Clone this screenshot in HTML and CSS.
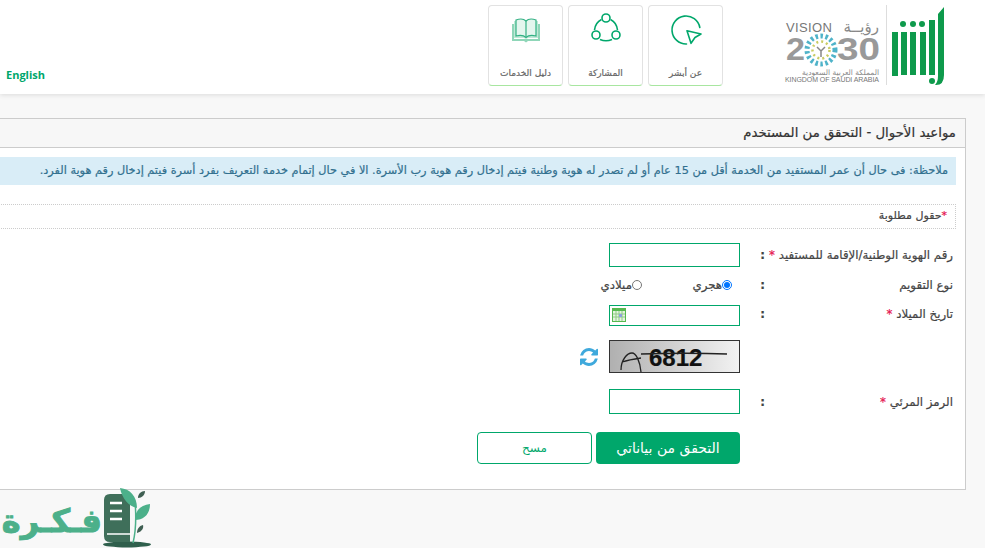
FILE: index.html
```html
<!DOCTYPE html>
<html lang="ar">
<head>
    <meta charset="UTF-8">
    <title>مواعيد الأحوال</title>
    <link rel="stylesheet" href="styles.css">
</head>
<body>
    <div class="header">
        <a class="lang" href="#">English</a>
        <div class="header-right">
            <a class="nav-card" href="#">
                <svg class="nav-icon" viewBox="0 0 34 34" width="34" height="34">
                    <path d="M3 13v17h12l2 1.500 2-1.500h12V13h-2v15H5V13z" fill="#8fd6b8"/>
                    <path d="M5 10v17h10l2 1 2-1h10V10z" fill="#bfe8d6"/>
                    <path d="M7 9c4-1.500 8-1 10 1 2-2 6-2.500 10-1v16c-4-1-8-.500-10 1.500C15 24.500 11 24 7 25z" fill="#e4f6ee" stroke="#33b184" stroke-width="1.200"/>
                    <path d="M17 10v16" stroke="#33b184" stroke-width="1.200"/>
                </svg>
                <span>دليل الخدمات</span>
            </a>
            <a class="nav-card" href="#">
                <svg class="nav-icon" viewBox="0 0 34 34" width="34" height="34">
                    <circle cx="17" cy="7" r="4" fill="none" stroke="#00a76b" stroke-width="1.600"/>
                    <circle cx="7" cy="24" r="4" fill="none" stroke="#00a76b" stroke-width="1.600"/>
                    <circle cx="27" cy="24" r="4" fill="none" stroke="#00a76b" stroke-width="1.600"/>
                    <path d="M12.500 8.500C8.500 10.500 6 14.500 5.500 19M21.500 8.500c4 2 6.500 6 7 10.500M11 28.500c3.500 1.500 8.500 1.500 12 0" fill="none" stroke="#00a76b" stroke-width="1.600"/>
                </svg>
                <span>المشاركة</span>
            </a>
            <a class="nav-card" href="#">
                <svg class="nav-icon" viewBox="0 0 34 34" width="34" height="34">
                    <path d="M30.800 16.500A14 14 0 1 0 17.500 33" fill="none" stroke="#00a76b" stroke-width="1.600" stroke-linecap="round"/>
                    <path d="M18 19.700l14 3.300-6 3.500-4 5.800z" fill="#fff" stroke="#00a76b" stroke-width="1.600" stroke-linejoin="round"/>
                </svg>
                <span>عن أبشر</span>
            </a>
            <svg class="logo" viewBox="0 0 170 90" width="170" height="90">
                <text class="logo-vision" x="6" y="32" textLength="46">VISION</text>
                <text class="logo-roya" x="99" y="32" text-anchor="end">رؤيــة</text>
                <text class="logo-year" x="6" y="60" textLength="19" lengthAdjust="spacingAndGlyphs">2</text>
                <text class="logo-year" x="57" y="60" textLength="43" lengthAdjust="spacingAndGlyphs">30</text>
                <circle cx="41" cy="50" r="14" fill="none" stroke="#4fb3c9" stroke-width="5" stroke-dasharray="2.500 2.500"/>
                <circle cx="41" cy="50" r="8.500" fill="none" stroke="#c9cc63" stroke-width="2.500" stroke-dasharray="2 3"/>
                <path d="M37 47l4 4 4-4M41 51v6" fill="none" stroke="#888" stroke-width="1.500"/>
                <text class="logo-small" x="99" y="75" text-anchor="end">المملكة العربية السعودية</text>
                <text class="logo-en" x="5" y="82" textLength="94">KINGDOM OF SAUDI ARABIA</text>
                <rect x="106" y="5" width="1" height="80" fill="#ddd"/>
                <g fill="#0e9a4c">
                    <rect x="112" y="32" width="6" height="44"/>
                    <rect x="121" y="32" width="6" height="43"/>
                    <rect x="130" y="32" width="6" height="43"/>
                    <rect x="140" y="32" width="6" height="43"/>
                    <rect x="149" y="20" width="6" height="55"/>
                    <path d="M158 14l6-7v68q0 10-8 10h-1q3-3 3-9z"/>
                    <circle cx="123" cy="24" r="3"/>
                    <circle cx="133" cy="24" r="3"/>
                    <circle cx="142" cy="24" r="3"/>
                    <circle cx="152" cy="81" r="3"/>
                </g>
            </svg>
        </div>
    </div>

    <div class="content" dir="rtl">
        <div class="panel">
            <div class="panel-title">مواعيد الأحوال - التحقق من المستخدم</div>
            <div class="panel-body">
                <div class="note">ملاحظة: فى حال أن عمر المستفيد من الخدمة أقل من 15 عام أو لم تصدر له هوية وطنية فيتم إدخال رقم هوية رب الأسرة. الا في حال إتمام خدمة التعريف بفرد أسرة فيتم إدخال رقم هوية الفرد.</div>
                <div class="required-note"><span class="star">*</span>حقول مطلوبة</div>

                <div class="form-row">
                    <label>رقم الهوية الوطنية/الإقامة للمستفيد <span class="star">*</span></label>
                    <span class="colon">:</span>
                    <div class="field"><input type="text" class="text-input"></div>
                </div>
                <div class="form-row row-radio">
                    <label>نوع التقويم</label>
                    <span class="colon">:</span>
                    <div class="field">
                        <span class="radio-item"><input type="radio" name="cal" checked>هجري</span>
                        <span class="radio-item"><input type="radio" name="cal">ميلادي</span>
                    </div>
                </div>
                <div class="form-row row-date">
                    <label>تاريخ الميلاد <span class="star">*</span></label>
                    <span class="colon">:</span>
                    <div class="field">
                        <div class="date-wrap">
                            <input type="text" class="text-input date-input">
                            <svg class="cal-icon" viewBox="0 0 14 14" width="14" height="14">
                                <rect width="14" height="14" fill="#56b84f"/>
                                <rect x="1" y="3" width="12" height="10" fill="#e4f3df"/>
                                <path d="M1 6h12M1 9h12M4 3v10M7 3v10M10 3v10" stroke="#8ecb85" stroke-width="1"/>
                                <rect x="7" y="6" width="3" height="3" fill="#8f9fe0"/>
                            </svg>
                        </div>
                    </div>
                </div>
                <div class="form-row row-captcha">
                    <label></label>
                    <span class="colon"></span>
                    <div class="field">
                        <div class="captcha">
                            <span>6812</span>
                            <svg class="captcha-lines" viewBox="0 0 131 33" width="131" height="33">
                                <path d="M12 30c0-10 6-17 11-17 4 0 8 8 9 19M13 22c6-2 12-3 19-4M32 14c30-1 60-1 86 0" fill="none" stroke="#222" stroke-width="1.300"/>
                            </svg>
                        </div>
                        <svg class="refresh" viewBox="0 0 1536 1536" width="18" height="18">
                            <path fill="#3fa9dc" d="M1511 928q0 5-1 7-64 268-268 434.500t-478 166.500q-146 0-282.500-55t-243.500-157l-129 129q-19 19-45 19t-45-19-19-45v-448q0-26 19-45t45-19h448q26 0 45 19t19 45-19 45l-137 137q71 66 161 102t187 36q134 0 250-65t186-179q11-17 53-117 8-23 30-23h192q13 0 22.500 9.500t9.500 22.500zm25-800v448q0 26-19 45t-45 19h-448q-26 0-45-19t-19-45 19-45l138-138q-148-137-349-137-134 0-250 65t-186 179q-11 17-53 117-8 23-30 23h-199q-13 0-22.500-9.500t-9.500-22.500v-7q65-268 270-434.500t480-166.500q146 0 284 55.500t245 156.500l130-129q19-19 45-19t45 19 19 45z"/>
                        </svg>
                    </div>
                </div>
                <div class="form-row row-code">
                    <label>الرمز المرئي <span class="star">*</span></label>
                    <span class="colon">:</span>
                    <div class="field"><input type="text" class="text-input code-input"></div>
                </div>
                <div class="buttons">
                    <button class="btn-primary">التحقق من بياناتي</button>
                    <button class="btn-outline">مسح</button>
                </div>
            </div>
        </div>
    </div>

    <div class="watermark">
        <span class="watermark-text" dir="rtl">فـكـرة</span>
        <svg viewBox="0 0 50 60" width="50" height="60">
            <ellipse cx="25" cy="56.500" rx="24" ry="3" fill="#2f5f4c"/>
            <path d="M2 12q0-6 6-6h20v48H8q-6 0-6-6z" fill="#3f6f5a"/>
            <path d="M8 15h12M8 23h12M8 31h12" stroke="#fff" stroke-width="2.500"/>
            <path d="M5 46h24" stroke="#fff" stroke-width="1.500"/>
            <path d="M31 55c3-12 3-30 2-42" fill="none" stroke="#4cb08a" stroke-width="1.500"/>
            <path d="M18 0c10 1 17 8 17 20C26 18 20 10 18 0zM33 32c0-10 6-15 15-16 0 10-6 16-15 16z" fill="#4cb08a"/>
            <path d="M36 10c0-4 3-7 7-7 0 4-3 7-7 7zM35 45c0-4 2-7 6-8 1 4-2 7-6 8z" fill="#3f5f52"/>
        </svg>
    </div>
</body>
</html>
```
FILE: styles.css
```css
html, body {
    margin: 0;
    height: 548px;
    overflow: hidden;
}

body {
    position: relative;
    background: #f8f8f8;
    font-family: "DejaVu Sans", Tahoma, sans-serif;
    color: #444;
}

.header {
    height: 94px;
    background: #fff;
    box-shadow: 0 1px 5px rgba(0, 0, 0, 0.12);
    display: flex;
    justify-content: space-between;
    align-items: flex-start;
    padding: 0 35px 0 6px;
}

.lang {
    margin-top: 67px;
    font-size: 11px;
    font-weight: bold;
    font-family: "Open Sans", sans-serif;
    color: #00a76b;
    text-decoration: none;
}

.header-right {
    display: flex;
    align-items: flex-start;
    padding-top: 5px;
    gap: 5px;
}

.nav-card {
    box-sizing: border-box;
    width: 75px;
    height: 81px;
    background: #fff;
    border: 1px solid #e2e2e2;
    border-bottom: 1px solid #a8e6a0;
    border-radius: 4px;
    display: flex;
    flex-direction: column;
    align-items: center;
    font-size: 9px;
    color: #666;
    -webkit-text-stroke: 0.2px #666;
    text-decoration: none;
}

.nav-icon {
    margin-top: 5px;
}

.nav-card span {
    margin-top: 23px;
}

.logo {
    margin: -5px 0 0 52px;
}

.logo-vision { font: 13px "Liberation Sans", sans-serif; fill: #777; }
.logo-roya { font: 15px "DejaVu Sans", sans-serif; fill: #888; }
.logo-year { font: bold 31px "Liberation Sans", sans-serif; fill: #999; }
.logo-small { font: 7.500px "DejaVu Sans", sans-serif; fill: #888; }
.logo-en { font: 7px "Liberation Sans", sans-serif; fill: #777; }

.content {
    margin: 24px 19px 0 -40px;
}

.panel {
    height: 370px;
    background: #fff;
    border: 1px solid #ccc;
    -webkit-text-stroke: 0.2px currentColor;
}

.panel-title {
    height: 28px;
    line-height: 27px;
    padding-right: 9px;
    background: #f7f7f7;
    border-bottom: 1px solid #ccc;
    font-size: 13.300px;
    color: #333;
}

.panel-body {
    padding: 9px 9px 0 0;
}

.note {
    height: 28px;
    line-height: 27px;
    padding-right: 8px;
    background: #d9edf7;
    color: #31708f;
    font-size: 11.300px;
    white-space: nowrap;
}

.required-note {
    height: 23px;
    line-height: 22px;
    margin: 19px 0 14px;
    padding-right: 8px;
    border: 1px dotted #ccc;
    border-left: none;
    font-size: 11px;
}

.star {
    color: #e5134f;
}

.form-row {
    display: grid;
    grid-template-columns: 186px 20px 1fr;
    align-items: center;
    margin-bottom: 10px;
    font-size: 11.800px;
}

.form-row label {
    padding-right: 3px;
    white-space: nowrap;
}

.colon {
    text-align: center;
    padding-left: 5px;
    font-weight: bold;
}

.field {
    display: flex;
    align-items: center;
    margin-right: 10px;
}

.text-input {
    width: 131px;
    height: 24px;
    box-sizing: border-box;
    border: 1px solid #00a76b;
    background: #fff;
    margin: 0;
}

.row-radio .field {
    height: 18px;
    margin-right: 18px;
}

.row-radio label,
.row-radio .colon,
.row-radio .radio-item {
    margin-bottom: 3px;
}

.radio-item {
    width: 90px;
    display: flex;
    align-items: center;
}

.radio-item input {
    width: 10px;
    height: 10px;
    margin: 0;
}

.row-date {
    margin-bottom: 14px;
}

.row-date label,
.row-date .colon {
    margin-bottom: 4px;
}

.date-wrap {
    position: relative;
}

.date-input {
    display: block;
    height: 21px;
}

.cal-icon {
    position: absolute;
    left: 3px;
    top: 3px;
}

.row-captcha {
    margin-bottom: 16px;
}

.captcha {
    position: relative;
    width: 131px;
    height: 33px;
    box-sizing: border-box;
    border: 1px solid #333;
    background: linear-gradient(to right, #b0b0b0, #f2f2f2);
    direction: ltr;
    font: bold 24px "Liberation Sans", sans-serif;
    color: #111;
    line-height: 33px;
    padding-left: 39px;
}

.captcha-lines {
    position: absolute;
    left: -1px;
    top: -1px;
}

.refresh {
    margin-right: 11px;
}

.row-code {
    margin-bottom: 18px;
}

.code-input {
    height: 25px;
}

.buttons {
    display: flex;
    gap: 4px;
    margin-right: 216px;
}

.buttons button {
    height: 32px;
    border-radius: 4px;
    font-family: "DejaVu Sans", sans-serif;
}

.btn-primary {
    width: 144px;
    background: #00a76b;
    border: none;
    color: #fff;
    font-size: 14px;
    -webkit-text-stroke: 0;
}

.btn-outline {
    width: 115px;
    background: #fff;
    border: 1px solid #00a76b;
    color: #00a76b;
    font-size: 12px;
    -webkit-text-stroke: 0;
}

.watermark {
    position: absolute;
    left: 0;
    top: 488px;
    display: flex;
    align-items: flex-end;
}

.watermark-text {
    width: 102px;
    margin-bottom: -2px;
    font-size: 32px;
    line-height: 58px;
    font-weight: bold;
    color: #4cb08a;
    -webkit-text-stroke: 1px #4cb08a;
    white-space: nowrap;
}
```
